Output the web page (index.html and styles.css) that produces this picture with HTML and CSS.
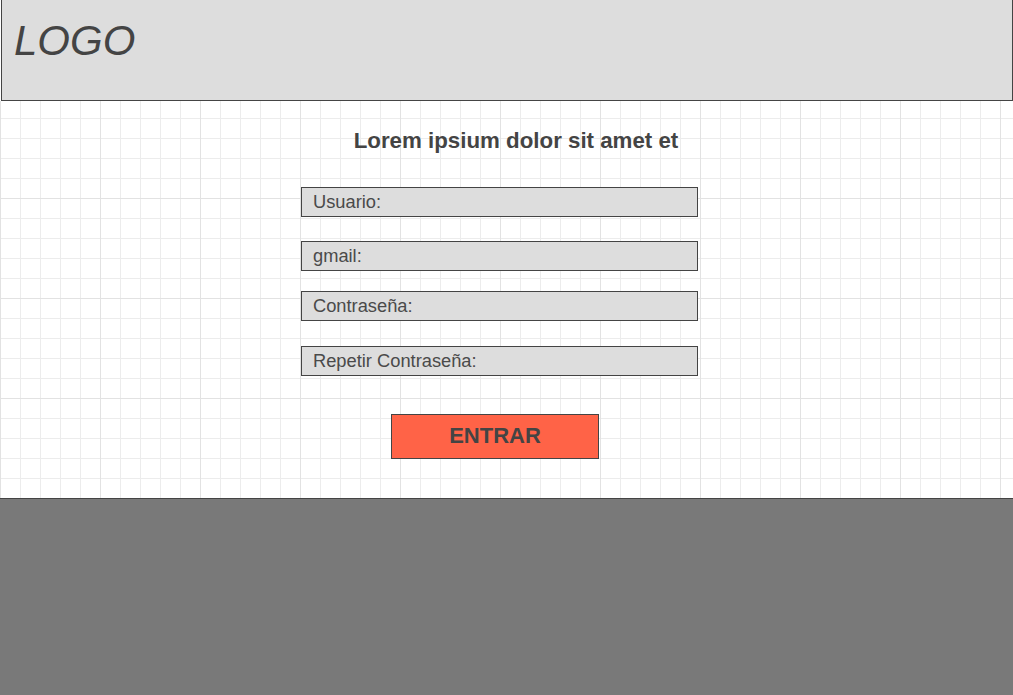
FILE: index.html
```html
<!DOCTYPE html>
<html lang="es">
<head>
<meta charset="utf-8">
<title>Registro</title>
<link rel="stylesheet" href="styles.css">
</head>
<body>
<header class="top">
  <div class="logo">LOGO</div>
</header>
<main class="canvas">
  <h1 class="title">Lorem ipsium dolor sit amet et</h1>
  <form class="form">
    <div class="field f1">Usuario:</div>
    <div class="field f2">gmail:</div>
    <div class="field f3">Contraseña:</div>
    <div class="field f4">Repetir Contraseña:</div>
    <div class="btn">ENTRAR</div>
  </form>
</main>
<footer class="bottom"></footer>
</body>
</html>
```
FILE: styles.css
```css
* { box-sizing: border-box; }
html, body { margin: 0; padding: 0; }
body {
  width: 1013px;
  height: 695px;
  overflow: hidden;
  font-family: "Liberation Sans", Arial, sans-serif;
  color: #444;
  background: #fff;
}
.top {
  height: 101px;
  margin-left: 1px;
  background: #dddddd;
  border: 1px solid #444;
  border-top: none;
  padding: 18px 0 0 12px;
}
.logo {
  font-style: italic;
  font-size: 42px;
  line-height: 46px;
  color: #444;
}
.canvas {
  height: 397px;
  background-color: #fff;
  background-image:
    linear-gradient(to right, #e2e2e2 1px, transparent 1px),
    linear-gradient(to bottom, #e2e2e2 1px, transparent 1px),
    linear-gradient(to right, #ececec 1px, transparent 1px),
    linear-gradient(to bottom, #ececec 1px, transparent 1px);
  background-size: 100px 100px, 100px 100px, 20px 20px, 20px 20px;
  background-position: 0 -3px, 0 -3px, 0 -3px, 0 -3px;
  padding-top: 28px;
}
.title {
  margin: 0;
  padding-left: 19px;
  text-align: center;
  font-size: 22.3px;
  line-height: 24px;
  font-weight: bold;
  color: #444;
}
.form {
  display: flex;
  flex-direction: column;
  align-items: flex-start;
  margin-left: 301px;
  padding-top: 34px;
}
.field {
  width: 397px;
  height: 30px;
  background: #dddddd;
  border: 1px solid #444;
  padding-left: 11px;
  font-size: 18.3px;
  line-height: 28px;
  color: #4a4a4a;
}
.f2 { margin-top: 24px; }
.f3 { margin-top: 20px; }
.f4 { margin-top: 25px; }
.btn {
  margin-top: 38px;
  margin-left: 90px;
  width: 208px;
  height: 45px;
  background: #ff6347;
  border: 1px solid #444;
  text-align: center;
  font-size: 22px;
  font-weight: bold;
  line-height: 42px;
  color: #444;
}
.bottom {
  height: 197px;
  background: #797979;
  border-top: 1px solid #444;
}
```
